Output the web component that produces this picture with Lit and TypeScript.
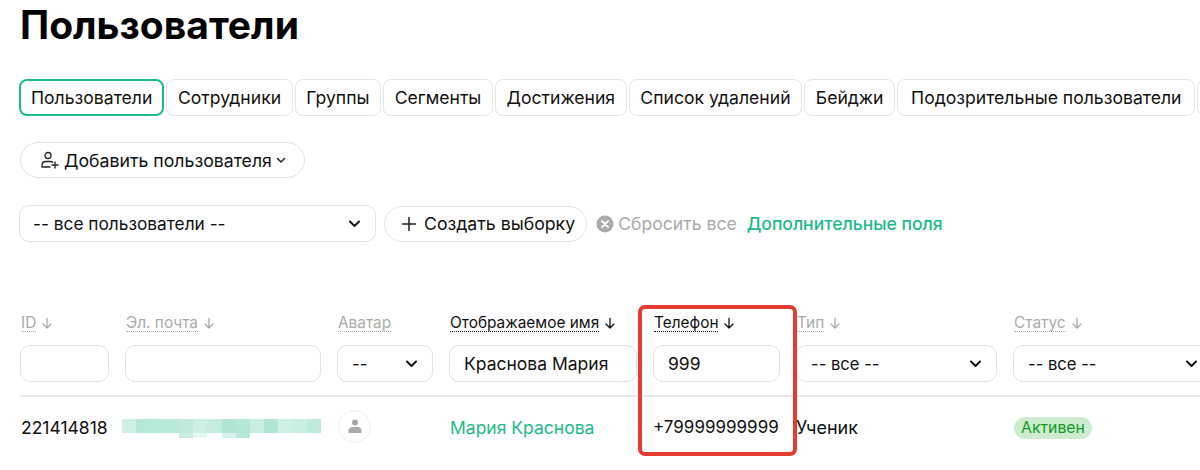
import { LitElement, html, css, svg } from "lit";
import { customElement } from "lit/decorators.js";

const TABS = [
  "Пользователи",
  "Сотрудники",
  "Группы",
  "Сегменты",
  "Достижения",
  "Список удалений",
  "Бейджи",
  "Подозрительные пользователи",
  "",
];

const COLUMNS = [
  { title: "ID", active: false, arrow: true },
  { title: "Эл. почта", active: false, arrow: true },
  { title: "Аватар", active: false, arrow: false },
  { title: "Отображаемое имя", active: true, arrow: true },
  { title: "Телефон", active: true, arrow: true },
  { title: "Тип", active: false, arrow: true },
  { title: "Статус", active: false, arrow: true },
];

// размытый email: цвета верхней и нижней полосы
const BLUR_TOP = ["#d0f0e5", "#b5e8d7", "#b7e9d8", "#b9e9d9", "#c0ebdc", "#cdefe4", "#c4ecdf", "#aee5d3", "#b6e8d8", "#c8eee1", "#aee5d3", "#cef0e6", "#c9eee2", "#bdeadc"];
const BLUR_BOTTOM = ["#fff", "#fff", "#fff", "#fff", "#c9eee2", "#e8f9f4", "#fff", "#d6f2e9", "#b9e9d9", "#fff", "#fff", "#fff", "#fff", "#fff"];

const chevron = svg`<path d="M2 2.5 L6.5 7 L11 2.5" fill="none" stroke="currentColor" stroke-width="2" stroke-linecap="round" stroke-linejoin="round"/>`;
const arrowDown = svg`<path d="M6 1.5 V11 M2 7 L6 11 L10 7" fill="none" stroke="currentColor" stroke-width="1.3" stroke-linecap="round" stroke-linejoin="round"/>`;

@customElement("app-root")
export class AppRoot extends LitElement {
  static styles = css`
    :host {
      display: block;
      position: relative;
      width: 1200px;
      height: 470px;
      overflow: hidden;
      background: #fff;
      color: #111;
      font-family: "Inter", "Noto Sans", sans-serif;
    }

    .title {
      margin: 0;
      padding: 0 0 0 20px;
      height: 79px;
      font-size: 39px;
      line-height: 50px;
      font-weight: 700;
      color: #000;
    }

    .tabs {
      display: flex;
      gap: 2px;
      padding-left: 19px;
      white-space: nowrap;
    }

    .tab {
      flex-shrink: 0;
      height: 37px;
      box-sizing: border-box;
      padding: 0 10.6px;
      display: flex;
      align-items: center;
      border: 1px solid #e4e4e4;
      border-radius: 8px;
      font-size: 17.6px;
    }

    .tab.active {
      border: 2px solid #1dbb8b;
      padding: 0 10px;
    }

    .tab.wide {
      padding: 0 13px;
    }

    .tab.empty {
      width: 40px;
    }

    .add-row {
      padding: 26px 0 0 20px;
    }

    .add-btn {
      display: inline-flex;
      align-items: center;
      gap: 4px;
      height: 36px;
      box-sizing: border-box;
      padding: 0 18px 0 19px;
      border: 1px solid #e2e2e2;
      border-radius: 18px;
      font-size: 17.7px;
    }

    .filters {
      display: flex;
      align-items: center;
      padding: 27px 0 0 19px;
    }

    .select {
      display: flex;
      align-items: center;
      justify-content: space-between;
      box-sizing: border-box;
      height: 37px;
      border: 1px solid #e2e2e2;
      border-radius: 10px;
      background: #fff;
      font-size: 17.3px;
    }

    .filters .select {
      width: 357px;
      padding: 0 14px 0 13px;
      margin-right: 8px;
    }

    .create-btn {
      display: flex;
      align-items: center;
      gap: 7px;
      height: 36px;
      box-sizing: border-box;
      padding: 0 11px 0 16px;
      border: 1px solid #e2e2e2;
      border-radius: 18px;
      font-size: 17.7px;
      margin-right: 9px;
    }

    .reset {
      display: flex;
      align-items: center;
      gap: 4px;
      color: #aaa;
      font-size: 17.6px;
      margin-right: 10px;
    }

    .more {
      color: #1dbb8b;
      font-size: 17.5px;
      font-weight: 500;
    }

    .table {
      margin-top: 72px;
      padding-left: 20px;
    }

    .row {
      display: grid;
      grid-template-columns: 89px 196px 96px 188px 127px 201px 200px;
      column-gap: 16px;
    }

    .head {
      height: 31px;
      align-items: start;
    }

    .head-cell {
      display: flex;
      align-items: center;
      gap: 5px;
      font-size: 15.4px;
      line-height: 20px;
      color: #aaa;
      padding-left: 1px;
    }

    .head-cell.active {
      color: #111;
    }

    .head-cell span {
      border-bottom: 1px dotted currentColor;
      line-height: 17px;
    }

    .inputs {
      padding-bottom: 13px;
      border-bottom: 2px solid #e8e8e8;
    }

    .field {
      box-sizing: border-box;
      height: 37px;
      border: 1px solid #e2e2e2;
      border-radius: 10px;
      display: flex;
      align-items: center;
      padding: 0 14px;
      font-size: 17.5px;
    }

    .inputs .select {
      padding: 0 14px;
      font-size: 16.6px;
    }

    .data {
      height: 60px;
      align-items: center;
      font-size: 17.5px;
    }

    .data .id {
      margin-left: 1px;
    }

    .blur {
      display: flex;
      flex-direction: column;
      margin-left: -3px;
      width: 199px;
      margin-top: 2px;
    }

    .blur-line {
      display: grid;
      grid-template-columns: repeat(14, 1fr);
    }

    .blur-line.top {
      height: 14px;
    }

    .blur-line.bottom {
      height: 5px;
    }

    .avatar {
      width: 33px;
      height: 33px;
      margin-left: 1px;
      margin-top: -2px;
      box-sizing: border-box;
      border: 1px solid #eee;
      border-radius: 50%;
      display: flex;
      align-items: center;
      justify-content: center;
    }

    .name {
      color: #1dbb8b;
      padding-left: 1px;
    }

    .phone {
      font-size: 17px;
      white-space: nowrap;
    }

    .type {
      font-size: 18px;
    }

    .badge {
      display: inline-block;
      margin-left: 1px;
      background: #cdeccf;
      color: #0f9d1f;
      border-radius: 11px;
      font-size: 15.8px;
      line-height: 22px;
      padding: 0 7px;
    }

    .highlight {
      position: absolute;
      left: 638px;
      top: 305px;
      width: 159px;
      height: 151px;
      box-sizing: border-box;
      border: 4px solid #e53c32;
      border-radius: 7px;
    }
  `;

  private chevronIcon() {
    return html`<svg width="13" height="9" viewBox="0 0 13 9">${chevron}</svg>`;
  }

  render() {
    return html`
      <h1 class="title">Пользователи</h1>

      <div class="tabs">
        ${TABS.map(
          (t, i) =>
            html`<div class="tab ${i === 0 ? "active" : ""} ${i === 7 ? "wide" : ""} ${t ? "" : "empty"}">${t}</div>`
        )}
      </div>

      <div class="add-row">
        <div class="add-btn">
          <svg width="20" height="18" viewBox="0 0 20 18" fill="none" stroke="#222" stroke-width="1.3" stroke-linecap="round">
            <circle cx="8" cy="4.5" r="3" />
            <path d="M2 16 V14 C2 11.5 4 10.5 6 10.5 H10 C11 10.5 12 10.8 12.6 11.3 M2 16 H10 M15 11 V17 M12 14 H18" />
          </svg>
          Добавить пользователя
          <svg width="10" height="7" viewBox="0 0 10 7">
            <path d="M1.5 1.5 L5 5 L8.5 1.5" fill="none" stroke="#222" stroke-width="1.5" stroke-linecap="round" stroke-linejoin="round" />
          </svg>
        </div>
      </div>

      <div class="filters">
        <div class="select">-- все пользователи -- ${this.chevronIcon()}</div>
        <div class="create-btn">
          <svg width="16" height="16" viewBox="0 0 16 16">
            <path d="M8 1.5 V14.5 M1.5 8 H14.5" stroke="#222" stroke-width="1.5" stroke-linecap="round" />
          </svg>
          Создать выборку
        </div>
        <div class="reset">
          <svg width="18" height="18" viewBox="0 0 18 18">
            <circle cx="9" cy="9" r="8.5" fill="#aaa" />
            <path d="M6 6 L12 12 M12 6 L6 12" stroke="#fff" stroke-width="1.8" stroke-linecap="round" />
          </svg>
          Сбросить все
        </div>
        <div class="more">Дополнительные поля</div>
      </div>

      <div class="table">
        <div class="row head">
          ${COLUMNS.map(
            (c) => html`
              <div class="head-cell ${c.active ? "active" : ""}">
                <span>${c.title}</span>
                ${c.arrow
                  ? html`<svg width="12" height="13" viewBox="0 0 12 13">${arrowDown}</svg>`
                  : ""}
              </div>
            `
          )}
        </div>

        <div class="row inputs">
          <div class="field"></div>
          <div class="field"></div>
          <div class="select">-- ${this.chevronIcon()}</div>
          <div class="field">Краснова Мария</div>
          <div class="field">999</div>
          <div class="select">-- все -- ${this.chevronIcon()}</div>
          <div class="select">-- все -- ${this.chevronIcon()}</div>
        </div>

        <div class="row data">
          <div class="id">221414818</div>
          <div class="blur">
            <div class="blur-line top">
              ${BLUR_TOP.map((c) => html`<div style="background:${c}"></div>`)}
            </div>
            <div class="blur-line bottom">
              ${BLUR_BOTTOM.map((c) => html`<div style="background:${c}"></div>`)}
            </div>
          </div>
          <div class="avatar">
            <svg width="16" height="16" viewBox="0 0 16 16" fill="#aaa">
              <circle cx="8" cy="4.5" r="3" />
              <path d="M1.5 15 V12.5 C1.5 10.2 3.5 9 5.5 9 H10.5 C12.5 9 14.5 10.2 14.5 12.5 V15 Z" />
            </svg>
          </div>
          <div class="name">Мария Краснова</div>
          <div class="phone">+79999999999</div>
          <div class="type">Ученик</div>
          <div><span class="badge">Активен</span></div>
        </div>
      </div>

      <div class="highlight"></div>
    `;
  }
}
